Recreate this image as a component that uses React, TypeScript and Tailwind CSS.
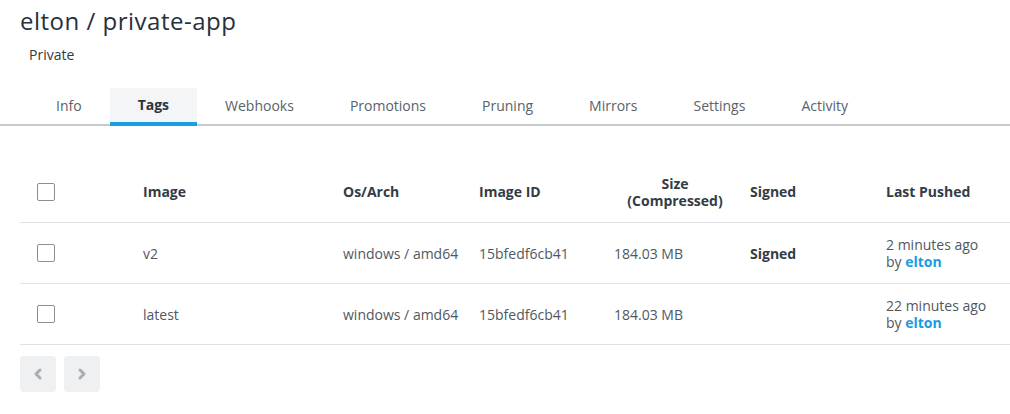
const tabs = ["Info", "Tags", "Webhooks", "Promotions", "Pruning", "Mirrors", "Settings", "Activity"];

const rows = [
    { tag: "v2", os: "windows / amd64", id: "15bfedf6cb41", size: "184.03 MB", signed: true, ago: "2 minutes ago" },
    { tag: "latest", os: "windows / amd64", id: "15bfedf6cb41", size: "184.03 MB", signed: false, ago: "22 minutes ago" },
];

const grid = "grid grid-cols-[123px_200px_136px_135px_136px_136px_1fr] items-center";

function Checkbox() {
    return <div className="h-[18px] w-[18px] rounded-[2px] border-[1.5px] border-[#8a8f94] bg-white" />;
}

export default function App() {
    return (
        <div className="h-[414px] w-[1010px] overflow-hidden bg-white font-['Open_Sans',sans-serif] text-[#4f5861]">
            <h1 className="pl-[20px] pt-[6px] text-[24px] leading-[30px] tracking-[0.5px] text-[#27313b]">elton / private-app</h1>
            <div className="mt-[9px] pl-[29px] text-[14px] leading-[20px] text-[#333a41]">Private</div>

            <div className="mt-[23px] flex h-[38px] border-b-2 border-[#c5c9cc] pl-[28px]">
                {tabs.map((t) => (
                    <div
                        key={t}
                        className={
                            t === "Tags"
                                ? "-mb-[2px] flex h-[38px] items-center border-b-4 border-[#1a9fe5] bg-[#f4f5f6] px-[28px] pb-[1px] text-[14px] font-bold text-[#2c343c]"
                                : "flex h-[36px] items-center px-[28px] pb-[1px] text-[14px] text-[#59626a]"
                        }
                    >
                        {t}
                    </div>
                ))}
            </div>

            <div className="ml-[20px] mt-[35px]">
                <div className={`${grid} h-[62px] border-b border-[#dfe2e4] text-[14px] font-bold leading-[17px] text-[#333c45]`}>
                    <div className="pl-[17px]">
                        <Checkbox />
                    </div>
                    <div>Image</div>
                    <div>Os/Arch</div>
                    <div>Image ID</div>
                    <div className="pr-[14px] text-center">
                        Size
                        <br />
                        (Compressed)
                    </div>
                    <div>Signed</div>
                    <div>Last Pushed</div>
                </div>
                {rows.map((r) => (
                    <div key={r.tag} className={`${grid} h-[61px] border-b border-[#dfe2e4] text-[14px] leading-[17px]`}>
                        <div className="pl-[17px]">
                            <Checkbox />
                        </div>
                        <div>{r.tag}</div>
                        <div>{r.os}</div>
                        <div>{r.id}</div>
                        <div>{r.size}</div>
                        <div className="font-bold text-[#333c45]">{r.signed ? "Signed" : ""}</div>
                        <div>
                            <div>{r.ago}</div>
                            <div>
                                by <span className="font-bold text-[#1a9be2]">elton</span>
                            </div>
                        </div>
                    </div>
                ))}

                <div className="mt-[11px] flex gap-[8px]">
                    {["‹", "›"].map((c) => (
                        <div key={c} className="flex h-[36px] w-[36px] items-center justify-center rounded-[4px] bg-[#eef0f1]">
                            <svg width="10" height="14" viewBox="0 0 10 14" className="text-[#a6aeb4]">
                                <path
                                    d={c === "‹" ? "M7 3 L3 7 L7 11" : "M3 3 L7 7 L3 11"}
                                    fill="none"
                                    stroke="currentColor"
                                    strokeWidth="3"
                                    strokeLinecap="round"
                                    strokeLinejoin="round"
                                />
                            </svg>
                        </div>
                    ))}
                </div>
            </div>
        </div>
    );
}
